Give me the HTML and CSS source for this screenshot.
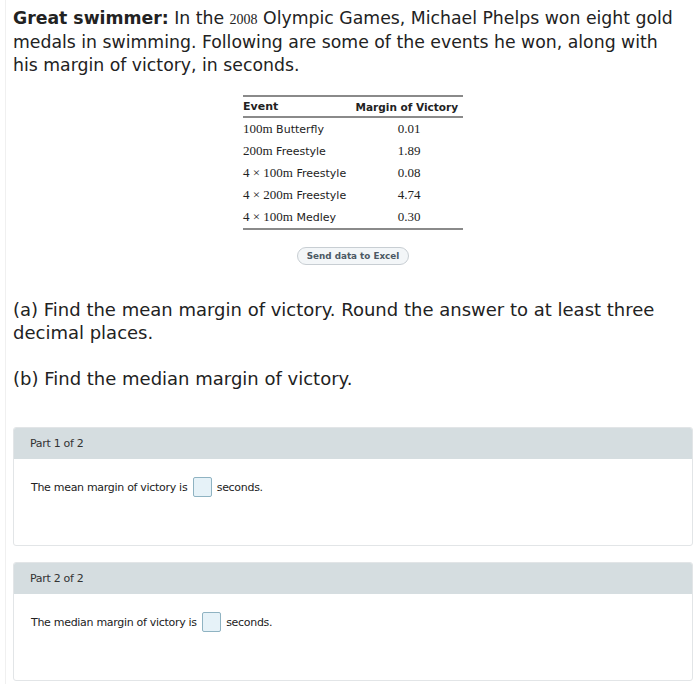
FILE: index.html
```html
<!DOCTYPE html>
<html>
<head>
<meta charset="utf-8">
<link rel="stylesheet" href="styles.css">
</head>
<body>
<div class="page">
  <p class="intro"><b>Great swimmer:</b> In the <span class="num">2008</span> Olympic Games, Michael Phelps won eight gold medals in swimming. Following are some of the events he won, along with his margin of victory, in seconds.</p>

  <table class="data">
    <thead>
      <tr><th class="ev">Event</th><th class="mv">Margin of Victory</th></tr>
    </thead>
    <tbody>
      <tr><td class="ev"><span class="num">100m</span> Butterfly</td><td class="mv"><span class="num">0.01</span></td></tr>
      <tr><td class="ev"><span class="num">200m</span> Freestyle</td><td class="mv"><span class="num">1.89</span></td></tr>
      <tr><td class="ev"><span class="num">4 × 100m</span> Freestyle</td><td class="mv"><span class="num">0.08</span></td></tr>
      <tr><td class="ev"><span class="num">4 × 200m</span> Freestyle</td><td class="mv"><span class="num">4.74</span></td></tr>
      <tr><td class="ev"><span class="num">4 × 100m</span> Medley</td><td class="mv"><span class="num">0.30</span></td></tr>
    </tbody>
  </table>

  <div class="btnrow"><span class="btn">Send data to Excel</span></div>

  <p class="q qa">(a) Find the mean margin of victory. Round the answer to at least three decimal places.</p>
  <p class="q qb">(b) Find the median margin of victory.</p>

  <div class="card">
    <div class="card-head">Part 1 of 2</div>
    <div class="card-body">The mean margin of victory is <span class="box"></span> seconds.</div>
  </div>

  <div class="card card2">
    <div class="card-head">Part 2 of 2</div>
    <div class="card-body">The median margin of victory is <span class="box"></span> seconds.</div>
  </div>
</div>
</body>
</html>
```
FILE: styles.css
```css
html, body {
  margin: 0;
  padding: 0;
  background: #fff;
}
body {
  font-family: "DejaVu Sans", Verdana, sans-serif;
  color: #222;
}
.page {
  margin-left: 5px;
  border-left: 1px solid #f0f0f0;
  padding: 7px 7px 0 7px;
  min-height: 684px;
  box-sizing: border-box;
  width: 695px;
}
.intro {
  margin: 0;
  max-width: 668px;
  font-size: 17.3px;
  line-height: 23px;
}
.intro .num {
  font-family: "Liberation Serif", "Times New Roman", serif;
  font-size: 14px;
}
.data {
  margin: 18px auto 0;
  border-collapse: collapse;
  width: 220px;
  table-layout: fixed;
  font-size: 11px;
  color: #222;
  border-top: 2px solid #8a8a8a;
  border-bottom: 2px solid #8a8a8a;
}
.data th {
  font-weight: bold;
  height: 19px;
  padding: 0;
  border-bottom: 2px solid #8a8a8a;
  vertical-align: middle;
}
.data th.ev { text-align: left; width: 112px; }
.data th.mv { text-align: right; padding-right: 5px; font-size: 10.5px; }
.data td {
  height: 22px;
  padding: 0;
  vertical-align: middle;
}
.data td.ev { text-align: left; white-space: nowrap; }
.data td.mv { text-align: center; }
.data .num {
  font-family: "Liberation Serif", "Times New Roman", serif;
  font-size: 13px;
}
.btnrow {
  display: flex;
  justify-content: center;
  margin-top: 17px;
}
.btn {
  display: inline-flex;
  align-items: center;
  height: 16px;
  padding: 0 9px;
  border: 1px solid #c8ced3;
  border-radius: 9px;
  background: #f3f6f8;
  color: #4c5964;
  font-size: 8.8px;
  font-weight: bold;
}
.q {
  margin: 0;
  font-size: 18px;
  line-height: 23px;
}
.qa { margin-top: 33px; }
.qb { margin-top: 23px; }
.card {
  margin-top: 37px;
  border: 1px solid #e2e5e7;
  border-radius: 3px;
  height: 119px;
  box-sizing: border-box;
  overflow: hidden;
}
.card2 { margin-top: 16px; }
.card-head {
  background: #d5dde0;
  height: 31px;
  display: flex;
  align-items: center;
  padding-left: 16px;
  font-size: 11px;
  color: #333;
  letter-spacing: -0.3px;
}
.card-body {
  padding: 18px 0 0 17px;
  font-size: 11px;
  color: #222;
  display: flex;
  align-items: center;
  height: 20px;
  box-sizing: content-box;
  letter-spacing: -0.3px;
  white-space: pre;
}
.box {
  display: inline-block;
  width: 17px;
  height: 18px;
  border: 1px solid #8fb3c2;
  border-radius: 2px;
  background: #e6f2f8;
  margin: 0 2px 0 2px;
}
```
